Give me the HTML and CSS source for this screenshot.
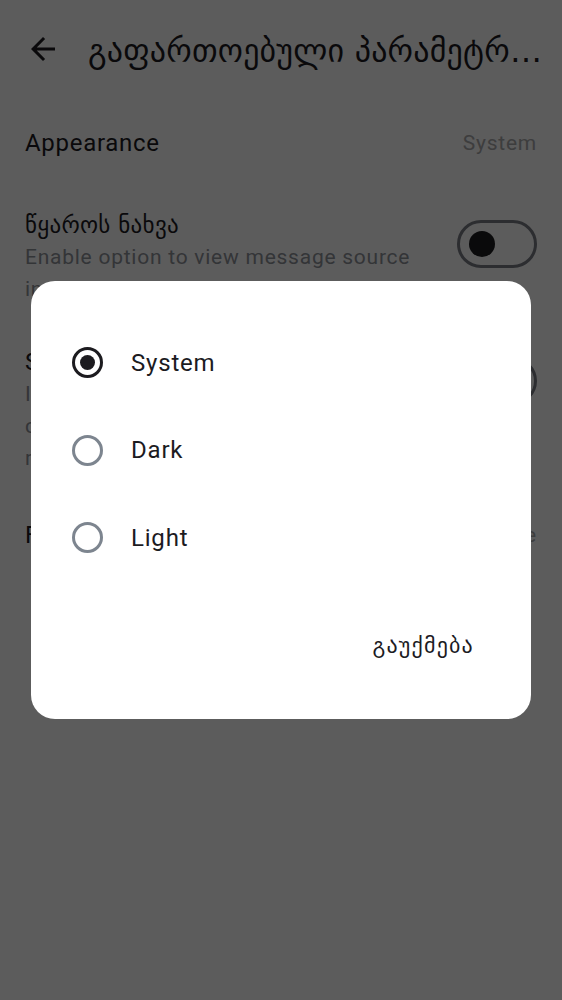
FILE: index.html
```html
<!DOCTYPE html>
<html lang="ka">
<head>
<meta charset="utf-8">
<link rel="stylesheet" href="styles.css">
</head>
<body>
<div class="page">
  <header class="appbar">
    <svg class="back" width="36" height="36" viewBox="0 0 24 24"><path d="M20 11H7.83l5.59-5.59L12 4l-8 8 8 8 1.41-1.41L7.83 13H20v-2z" fill="#1c1b1f"/></svg>
    <h1 class="title">გაფართოებული პარამეტრები</h1>
  </header>
  <div class="list">
    <div class="row row-simple">
      <div class="row-title">Appearance</div>
      <div class="row-value">System</div>
    </div>
    <div class="row row-switch">
      <div class="row-text">
        <div class="row-title ka">წყაროს ნახვა</div>
        <div class="row-sub">Enable option to view message source in the toolbar</div>
      </div>
      <div class="switch"><span class="thumb"></span></div>
    </div>
    <div class="row row-switch">
      <div class="row-text">
        <div class="row-title">Show remote content</div>
        <div class="row-sub">Images and other remote<br>content will be loaded from<br>remote servers automatically</div>
      </div>
      <div class="switch"><span class="thumb"></span></div>
    </div>
    <div class="row row-simple row-last">
      <div class="row-title">Font size</div>
      <div class="row-value">Large</div>
    </div>
  </div>
</div>
<div class="scrim">
  <div class="dialog">
    <div class="options">
      <div class="option"><span class="radio checked"></span><span class="label">System</span></div>
      <div class="option"><span class="radio"></span><span class="label">Dark</span></div>
      <div class="option"><span class="radio"></span><span class="label">Light</span></div>
    </div>
    <div class="actions"><button class="btn">გაუქმება</button></div>
  </div>
</div>
</body>
</html>
```
FILE: styles.css
```css
* { box-sizing: border-box; }
html, body { margin: 0; padding: 0; }
body {
  width: 562px;
  height: 1000px;
  background: #ffffff;
  font-family: Roboto, "DejaVu Sans", sans-serif;
  color: #1c1b1f;
  overflow: hidden;
  position: relative;
}
.appbar {
  height: 98px;
  display: flex;
  align-items: center;
  padding-left: 25px;
  padding-right: 12px;
}
.back { flex: none; margin-right: 27px; }
.title {
  margin: 0;
  font-weight: 400;
  font-size: 32px;
  line-height: 44px;
  letter-spacing: 0.2px;
  white-space: nowrap;
  overflow: hidden;
  text-overflow: ellipsis;
  font-family: "DejaVu Sans", sans-serif;
  padding-top: 4px;
}
.list { padding: 0 25px; }
.row { display: flex; justify-content: space-between; }
.row-simple { height: 90px; align-items: center; }
.row-last { height: 82px; }
.row-switch { padding: 21px 0 20px; align-items: flex-start; gap: 24px; }
.row-title { font-size: 24px; line-height: 32px; letter-spacing: 0.7px; }
.row-title.ka { font-family: "DejaVu Sans", sans-serif; font-size: 23px; letter-spacing: 0.3px; }
.row-value { font-size: 21px; letter-spacing: 0.75px; color: #a9a9ab; }
.row-text { flex: 1; min-width: 0; }
.row-sub { font-size: 21px; line-height: 32px; letter-spacing: 0.75px; color: #8f929a; }
.switch {
  flex: none;
  width: 80px;
  height: 48px;
  margin-top: 11px;
  border: 3px solid #7a7d86;
  border-radius: 24px;
  display: flex;
  align-items: center;
  padding-left: 9px;
}
.thumb { width: 26px; height: 26px; border-radius: 50%; background: #1c1c1f; }
.scrim {
  position: absolute;
  inset: 0;
  background: rgba(0, 0, 0, 0.64);
  display: flex;
  justify-content: center;
  align-items: flex-start;
  padding-top: 281px;
}
.dialog {
  width: 500px;
  height: 438px;
  background: #ffffff;
  border-radius: 24px;
  display: flex;
  flex-direction: column;
  padding: 38px 0 0 41px;
}
.options { display: flex; flex-direction: column; }
.option { height: 87.5px; display: flex; align-items: center; }
.radio {
  flex: none;
  width: 31px; height: 31px;
  border: 3px solid #7d858f;
  border-radius: 50%;
  margin-right: 28px;
  display: flex; align-items: center; justify-content: center;
}
.radio.checked { border-color: #1c1b1f; }
.radio.checked::after { content: ""; width: 15px; height: 15px; border-radius: 50%; background: #1c1b1f; }
.label { font-size: 24px; letter-spacing: 0.8px; color: #1c1b1f; }
.actions { display: flex; justify-content: flex-end; padding-right: 57px; margin-top: 50px; }
.btn {
  background: none; border: 0; padding: 0;
  font-family: "DejaVu Sans", sans-serif;
  font-size: 22px; line-height: 28px; letter-spacing: 1.2px; color: #1c1b1f;
}
```
